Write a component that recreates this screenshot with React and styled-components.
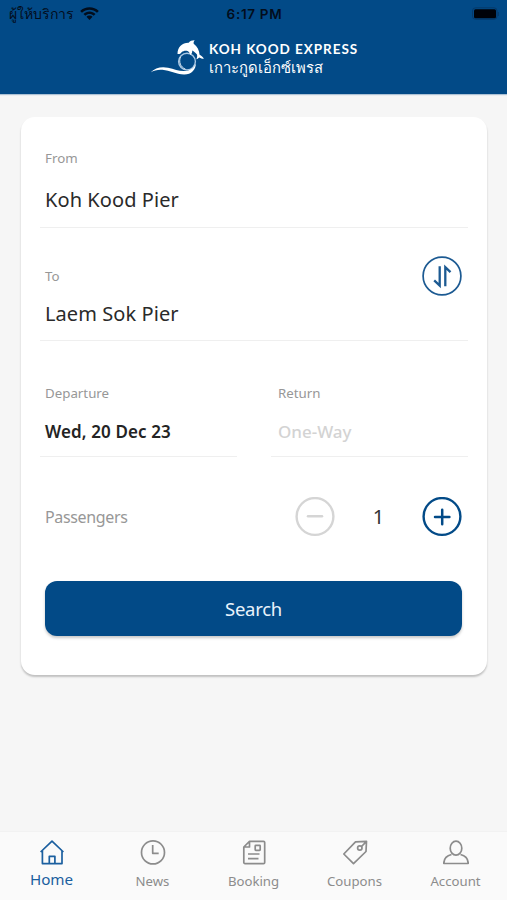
import React from "react";
import styled, { createGlobalStyle } from "styled-components";

const BLUE = "#024a87";

const GlobalStyle = createGlobalStyle`
  * { box-sizing: border-box; }
  body { margin: 0; background: #f6f6f6; font-family: "Noto Sans", "Open Sans", sans-serif; }
  button { font-family: inherit; padding: 0; cursor: pointer; }
  svg { display: block; }
`;

const Screen = styled.div`
  width: 507px;
  height: 900px;
  display: flex;
  flex-direction: column;
  background: #f6f6f6;
  overflow: hidden;
`;

const Header = styled.header`
  height: 94px;
  flex: none;
  background: ${BLUE};
  box-shadow: 0 1px 1px rgba(2, 74, 135, 0.3);
`;

const StatusBar = styled.div`
  height: 28px;
  padding: 0 7px 0 9px;
  display: grid;
  grid-template-columns: 1fr auto 1fr;
  align-items: center;
  color: #020d1c;
`;

const Carrier = styled.div`
  display: flex;
  align-items: center;
  gap: 5px;
  font-size: 14px;
  font-weight: 500;
  line-height: 28px;
`;

const CarrierName = styled.span`
  width: 66px;
  white-space: nowrap;
`;

const Clock = styled.div`
  font: 600 13.5px/28px Inter, sans-serif;
  letter-spacing: 0.7px;
`;

const Battery = styled.div`
  justify-self: end;
  width: 28px;
`;

const Brand = styled.div`
  margin: 9px 0 0 150px;
  display: flex;
  align-items: flex-start;
  color: #fff;
`;

const BrandText = styled.div`
  margin-left: 4px;
  padding-top: 3px;
`;

const BrandName = styled.div`
  font: 700 13.5px/18px Lato, sans-serif;
  letter-spacing: 0.95px;
  white-space: nowrap;
`;

const BrandThai = styled.div`
  font-size: 14.8px;
  font-weight: 300;
  line-height: 19px;
  white-space: nowrap;
`;

const Card = styled.main`
  width: 466px;
  height: 558px;
  margin: 23px 0 0 21px;
  flex: none;
  padding: 0 19px;
  border-radius: 14px;
  background: #fff;
  box-shadow: 0 2px 2px rgba(0, 0, 0, 0.22);
`;

const Field = styled.div`
  height: ${(p) => p.$height}px;
  padding: ${(p) => p.$top}px 5px 0;
  border-bottom: 1px solid #efefef;
`;

const FieldRow = styled.div`
  display: flex;
  justify-content: space-between;
`;

const Label = styled.div`
  font-size: 13.3px;
  line-height: 18px;
  letter-spacing: ${(p) => p.$track || 0}px;
  color: #979797;
`;

const Value = styled.div`
  margin-top: ${(p) => p.$gap}px;
  font-size: 20px;
  line-height: 28px;
  letter-spacing: 0.08px;
  color: #2a2a2a;
`;

const DateField = styled(Field)`
  width: 197px;
  padding-left: ${(p) => p.$left || 5}px;
`;

const DateValue = styled.div`
  margin-top: 18px;
  font-size: 17px;
  font-weight: ${(p) => (p.$empty ? 500 : 600)};
  line-height: 24px;
  letter-spacing: ${(p) => p.$track || 0}px;
  color: ${(p) => (p.$empty ? "#d3d3d3" : "#242424")};
`;

const RoundButton = styled.button`
  width: 40px;
  height: 40px;
  flex: none;
  border: 0;
  background: none;
`;

const ToRow = styled.div`
  height: 40px;
  display: flex;
  justify-content: space-between;
  align-items: center;
  padding-right: 1px;
`;

const Passengers = styled.div`
  height: 40px;
  margin: 40px 6px 0 5px;
  display: flex;
  align-items: center;
`;

const PassengerLabel = styled.div`
  flex: 1;
  font-size: 16px;
  line-height: 22px;
  letter-spacing: -0.35px;
  color: #979797;
`;

const Count = styled.div`
  width: 87px;
  text-align: center;
  font-size: 20px;
  line-height: 28px;
  color: #333;
`;

const SearchButton = styled.button`
  display: block;
  width: 417px;
  height: 55px;
  margin: 44px 0 0 5px;
  border: 0;
  border-radius: 12px;
  background: ${BLUE};
  box-shadow: 0 2px 3px rgba(0, 0, 0, 0.22);
  color: #e9f3fb;
  font-size: 18.5px;
  letter-spacing: -0.3px;
  line-height: 54px;
`;

const TabBar = styled.nav`
  height: 68px;
  margin-top: auto;
  display: grid;
  grid-template-columns: repeat(5, 101px);
  padding-left: 1px;
  background: #fafafa;
  box-shadow: 0 -1px 1px rgba(0, 0, 0, 0.015);
`;

const Tab = styled.a`
  display: flex;
  flex-direction: column;
  align-items: center;
  padding-top: 8px;
  color: ${(p) => (p.$active ? "#1b5f9f" : "#8c8c8c")};
`;

const TabLabel = styled.span`
  margin-top: ${(p) => (p.$active ? 3 : 5)}px;
  font-size: ${(p) => (p.$active ? 15.2 : 13.2)}px;
  line-height: 20px;
`;

const WifiIcon = () => (
  <svg width="19" height="14" viewBox="0 0 19 14" fill="currentColor">
    <path d="M9.5 0.3C13 0.3 16.3 1.6 18.8 3.9L17 5.8C15 3.9 12.3 2.8 9.5 2.8S4 3.9 2 5.8L.2 3.9C2.7 1.6 6 .3 9.5 .3Z" />
    <path d="M9.5 4.5c2.3 0 4.4.9 6 2.4l-1.8 1.9c-1.1-1.1-2.6-1.7-4.2-1.7s-3.1.6-4.2 1.7L3.5 6.9C5.1 5.4 7.2 4.5 9.5 4.5Z" />
    <path d="M9.5 8.6c1.2 0 2.2.4 3 1.2l-3 3.3-3-3.3c.8-.8 1.8-1.2 3-1.2Z" />
  </svg>
);

const BatteryIcon = () => (
  <svg width="28" height="14" viewBox="0 0 28 14">
    <rect x=".5" y=".8" width="24.5" height="11.5" rx="3" fill="none" stroke="#06396a" />
    <rect x="2" y="2.2" width="22" height="9" rx="1.5" fill="#000208" />
    <path d="M26.3 5v4" stroke="#06396a" />
  </svg>
);

const DolphinLogo = () => (
  <svg width="55" height="40" viewBox="0 0 55 40">
    <circle cx="37" cy="24.6" r="8.4" fill="none" stroke="#a9c8e4" strokeWidth="1.4" />
    <path d="M30.500 20c-2 5 0 10 5 12.200" fill="none" stroke="#d6e5f2" strokeWidth="1" />
    <path d="M.5 35.500C5 31 11 29.200 18 30.700c7 1.500 12 4 18 3.200 5-.7 8.500-3.500 9.700-7.500.5 6-4.700 11.300-11.700 11.100C26 37.300 20 33.500 12.500 32.800 8 32.400 4 33.500.5 35.500Z" fill="#fff" />
    <path d="M27.500 17C27.500 9.500 32.500 5.500 38.700 5.700c1.500-1.700 3.500-2.500 6-2.400-.9 1.100-1.300 2.200-1 3.500 3.600 2.500 5.500 6.500 5.900 11 1.800 1 3.400 2.200 4.300 4-1.700-.2-3.200-.4-4.700-1.300-.7.800-1.500 1.600-2.800 1.800.8-1.600.9-3 .6-4.700-1.500-2-3-3.400-4.800-4.200.2 1.700-.3 3.300-1.900 4.700-.5-2.400-1.600-3.800-3.500-4.400-2.500-.2-3.700.3-5.200 1.500-.8 1.400-2.500 2.200-4.100 1.800Z" fill="#fff" />
  </svg>
);

const SwapIcon = () => (
  <svg width="40" height="40" viewBox="0 0 40 40" fill="none" stroke="#1c5a92">
    <circle cx="20" cy="20" r="18.9" strokeWidth="1.7" />
    <path d="M17.7 10.300V29.600L12.200 24.400M23.300 30.200V11.200L28.500 16.200" strokeWidth="2.300" />
  </svg>
);

const StepIcon = ({ plus }) => (
  <svg width="40" height="40" viewBox="0 0 40 40" fill="none" stroke={plus ? BLUE : "#d5d5d5"} strokeLinecap="round">
    <circle cx="20" cy="19.5" r="18.4" strokeWidth="2.4" />
    <path d={plus ? "M13 20h14.4M20.200 12.800v14.400" : "M13 19.300h14"} strokeWidth="2.5" />
  </svg>
);

const icons = {
  Home: <path d="M1.6 12 13 1.2 24.400 12M3.400 10.500V23.600H23V10.500M10.300 23.500v-7.200h5.600v7.200" />,
  News: (
    <>
      <circle cx="13" cy="12.400" r="11.500" />
      <path d="M12.700 5v8.300h6" />
    </>
  ),
  Booking: (
    <>
      <path d="M8.500 1.300H22.500a1.200 1.200 0 0 1 1.200 1.200V22.400a1.200 1.200 0 0 1-1.200 1.200H4a1.200 1.200 0 0 1-1.200-1.200V7ZM8.500 1.500V7H3" />
      <rect x="14.200" y="5.400" width="5" height="5" rx=".6" />
      <path d="M7 14h11.500M7 18.600h10.500" />
    </>
  ),
  Coupons: (
    <>
      <path d="M13.500 1.800 24.500 1.300 24 11.500 11.500 23.600 1.800 14ZM19.500 6.500 24.500 1.300" />
      <circle cx="17.800" cy="8" r="2.200" />
    </>
  ),
  Account: (
    <>
      <ellipse cx="13" cy="8.200" rx="5.800" ry="7" />
      <path d="M8.500 14.500C3.500 15.700.8 18.500.8 23.500H25.200c0-5-2.700-7.800-7.700-9" />
    </>
  ),
};

const TabIcon = ({ name }) => (
  <svg width="26" height="26" viewBox="0 0 26 26" fill="none" stroke="currentColor" strokeWidth="1.7" strokeLinejoin="round">
    {icons[name]}
  </svg>
);

const tabs = [
  { name: "Home", active: true },
  { name: "News" },
  { name: "Booking" },
  { name: "Coupons" },
  { name: "Account" },
];

export default function App() {
  return (
    <Screen>
      <GlobalStyle />
      <Header>
        <StatusBar>
          <Carrier>
            <CarrierName>ผู้ให้บริการ</CarrierName>
            <WifiIcon />
          </Carrier>
          <Clock>6:17 PM</Clock>
          <Battery>
            <BatteryIcon />
          </Battery>
        </StatusBar>
        <Brand>
          <DolphinLogo />
          <BrandText>
            <BrandName>KOH KOOD EXPRESS</BrandName>
            <BrandThai>เกาะกูดเอ็กซ์เพรส</BrandThai>
          </BrandText>
        </Brand>
      </Header>
      <Card>
        <Field $height={111} $top={32}>
          <Label>From</Label>
          <Value $gap={19}>Koh Kood Pier</Value>
        </Field>
        <Field $height={113} $top={28}>
          <ToRow>
            <Label>To</Label>
            <RoundButton aria-label="Swap piers">
              <SwapIcon />
            </RoundButton>
          </ToRow>
          <Value $gap={4}>Laem Sok Pier</Value>
        </Field>
        <FieldRow>
          <DateField $height={116} $top={43}>
            <Label>Departure</Label>
            <DateValue $track={0.12}>Wed, 20 Dec 23</DateValue>
          </DateField>
          <DateField $height={116} $top={43} $left={7}>
            <Label>Return</Label>
            <DateValue $empty>One-Way</DateValue>
          </DateField>
        </FieldRow>
        <Passengers>
          <PassengerLabel>Passengers</PassengerLabel>
          <RoundButton aria-label="Remove passenger">
            <StepIcon />
          </RoundButton>
          <Count>1</Count>
          <RoundButton aria-label="Add passenger">
            <StepIcon plus />
          </RoundButton>
        </Passengers>
        <SearchButton>Search</SearchButton>
      </Card>
      <TabBar>
        {tabs.map((tab) => (
          <Tab key={tab.name} $active={tab.active}>
            <TabIcon name={tab.name} />
            <TabLabel $active={tab.active}>{tab.name}</TabLabel>
          </Tab>
        ))}
      </TabBar>
    </Screen>
  );
}
